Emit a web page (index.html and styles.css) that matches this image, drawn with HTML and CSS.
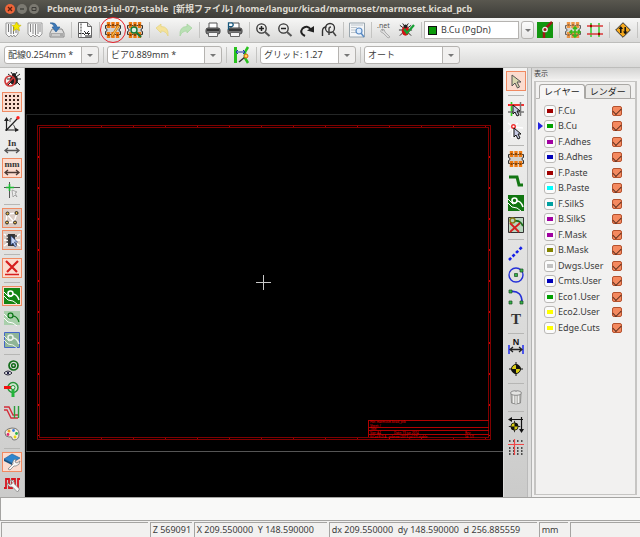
FILE: index.html
```html
<!DOCTYPE html>
<html lang="ja">
<head>
<meta charset="utf-8">
<title>Pcbnew</title>
<link rel="stylesheet" href="styles.css">
</head>
<body>
<svg class="defs" aria-hidden="true">
  <symbol id="chip" viewBox="0 0 16 16">
    <path d="M.5 3.500h15v3a1.500 1.500 0 0 0 0 3v3H.5v-3a1.500 1.500 0 0 0 0-3z" fill="#d2d0cc" stroke="#333"/>
    <path d="M3.500 0v6M8 0v6M12.500 0v6M3.500 10v6M8 10v6M12.500 10v6" stroke="#ee7a10" stroke-width="3.400"/>
    <path d="M2.500 3h2M7 3h2M11.500 3h2M2.500 13h2M7 13h2M11.500 13h2" stroke="#6a3400" stroke-width="1.600"/>
  </symbol>
  <symbol id="zone" viewBox="0 0 16 16">
    <path d="M0 4l5 5 3-1M0 8l4 4 5 1 4 3" fill="none" stroke="#fff" stroke-width="1"/>
    <circle cx="6.500" cy="5.500" r="2.500" fill="none" stroke="#fff" stroke-width="1.600"/>
    <path d="M9 6q4 0 6 6" fill="none" stroke="#fff" stroke-width="1.600"/>
  </symbol>
  <symbol id="printer" viewBox="0 0 16 16">
    <path d="M4 6V1h8v5" fill="#fff" stroke="#555"/>
    <rect x="1" y="6" width="14" height="6" rx="2" fill="#777" stroke="#444"/>
    <path d="M2 8h12" stroke="#222" stroke-width="1.500"/>
    <path d="M3.500 10.500h9v4h-9z" fill="#f4f4f4" stroke="#666"/>
  </symbol>
  <symbol id="target" viewBox="0 0 16 16">
    <path d="M8 1v14M1 8h14" stroke="#111"/>
    <circle cx="8" cy="8" r="4.500" fill="#d8cc10" stroke="#111"/>
    <path d="M8 8V3.500A4.500 4.500 0 0 1 12.500 8zM8 8v4.500A4.500 4.500 0 0 1 3.500 8z" fill="#111"/>
  </symbol>
  <symbol id="pointer" viewBox="0 0 16 16">
    <path d="M4 2v11l3-3 2.500 5 2-1-2.500-5h4z" fill="#d9d9b0" stroke="#555"/>
  </symbol>
  <symbol id="bug" viewBox="0 0 16 16">
    <path d="M2 3l4 3M1 8h4M2 14l4-4M14 3l-4 3M15 8h-4M14 14l-4-4M5 1l2 3M11 1L9 4" stroke="#222"/>
    <ellipse cx="8" cy="9" rx="4" ry="5"/>
    <circle cx="8" cy="4" r="2" fill="#222"/>
  </symbol>
</svg>

<div class="window">
  <header class="titlebar">
    <div class="winbuttons">
      <button class="winbtn close" aria-label="閉じる"><svg viewBox="0 0 10 10"><path d="M3 3l4 4M7 3L3 7" stroke="#5a2010" stroke-width="1.300"/></svg></button>
      <button class="winbtn" aria-label="最小化"><svg viewBox="0 0 10 10"><path d="M3 5h4" stroke="#3c3b37" stroke-width="1.300"/></svg></button>
      <button class="winbtn" aria-label="最大化"><svg viewBox="0 0 10 10"><path d="M3 3.500h4v3H3z" fill="none" stroke="#3c3b37"/></svg></button>
    </div>
    <h1>Pcbnew (2013-jul-07)-stable &nbsp;[新規ファイル] /home/langur/kicad/marmoset/marmoset.kicad_pcb</h1>
  </header>

  <div class="toolbar main-tools">
    <button class="tool" aria-label="新規"><svg viewBox="0 0 16 16"><path d="M1 1h12v11l-3 3-1-2-2 2-1-2-2 2-3-3z" fill="#f7f7f7" stroke="#999"/><path d="M3.500 2v8M6 2v10M8.500 4v8M11 5v6" stroke="#777"/><path d="M11.500 0l1.500 3 3 .3-2.200 2.200.7 3.200-3-1.700-3 1.700.7-3.200L7 3.300 10 3z" fill="#f5e700" stroke="#c4b400" stroke-width=".6"/></svg></button>
    <button class="tool" aria-label="開く"><svg viewBox="0 0 16 16"><path d="M1 1h14v11l-3 3-2-2-2 2-2-2-2 2-3-3z" fill="#f7f7f7" stroke="#999"/><path d="M3.500 2v8M6 2v10M8.500 2v11M11 2v10M13 2v8" stroke="#888"/></svg></button>
    <button class="tool" aria-label="保存"><svg viewBox="0 0 16 16"><path d="M3 7h10l2 4v4H1v-4z" fill="#ddd" stroke="#888"/><path d="M2 11h12v3.500H2z" fill="#aaa"/><path d="M3 13h8" stroke="#eee"/><path d="M1 1q6-1 7 4h3L7 10 3 5h2Q5 2 1 1z" fill="#3c78b8" stroke="#245a94" stroke-width=".6"/></svg></button>
    <span class="sep"></span>
    <button class="tool" aria-label="ページ設定"><svg viewBox="0 0 16 16"><path d="M1.500.5h9l4 4v11h-13z" fill="#fff" stroke="#666"/><path d="M10.500.5v4h4" fill="#ddd" stroke="#666"/><path d="M4 1.500v13M2 11.500h12" stroke="#333" stroke-dasharray="2 1"/><path d="M7 9l2 2-2 2M12 9l-2 2 2 2" fill="none" stroke="#333"/><path d="M8 13h6v2H8z" fill="#888"/></svg></button>
    <span class="sep"></span>
    <button class="tool marked" aria-label="モジュールエディタ"><svg viewBox="0 0 16 16"><use href="#chip"/><path d="M14.500 4L8 14l-1.500 1 .2-2.200L13 3z" fill="#ffc35a" stroke="#c06a00" stroke-width=".7"/></svg></button>
    <button class="tool" aria-label="モジュールビューア"><svg viewBox="0 0 16 16"><use href="#chip"/><circle cx="7" cy="8" r="3" fill="#dcefe0" stroke="#157a38" stroke-width="1.400"/><path d="M9.500 10.500L14 15" stroke="#157a38" stroke-width="2.200"/></svg></button>
    <span class="sep"></span>
    <button class="tool" aria-label="元に戻す"><svg viewBox="0 0 16 16"><path d="M1 6l5-4v2.500q8 0 7 9.500-2-5-7-5V11z" fill="#f5e29a" stroke="#e2d27c" stroke-width=".7"/></svg></button>
    <button class="tool" aria-label="やり直す"><svg viewBox="0 0 16 16"><path d="M15 6l-5-4v2.500q-8 0-7 9.500 2-5 7-5V11z" fill="#b9e0b4" stroke="#a3d39c" stroke-width=".7"/></svg></button>
    <span class="sep"></span>
    <button class="tool" aria-label="印刷"><svg><use href="#printer"/></svg></button>
    <button class="tool" aria-label="プロット"><svg viewBox="0 0 16 16"><use href="#printer"/><path d="M1.500 8V.8h2.700q2 0 2 1.900t-2 1.900H1.500" fill="#fff" stroke="#17567a" stroke-width="1.300"/></svg></button>
    <span class="sep"></span>
    <button class="tool" aria-label="ズームイン"><svg viewBox="0 0 16 16"><circle cx="6.500" cy="6.500" r="4.700" fill="none" stroke="#333" stroke-width="1.300"/><path d="M4 6.500h5M6.500 4v5" stroke="#222" stroke-width="1.500"/><path d="M10 10l4.500 4" stroke="#555" stroke-width="2"/></svg></button>
    <button class="tool" aria-label="ズームアウト"><svg viewBox="0 0 16 16"><circle cx="6.500" cy="6.500" r="4.700" fill="none" stroke="#333" stroke-width="1.300"/><path d="M4 6.500h5" stroke="#222" stroke-width="1.500"/><path d="M10 10l4.500 4" stroke="#555" stroke-width="2"/></svg></button>
    <button class="tool" aria-label="再描画"><svg viewBox="0 0 16 16"><path d="M6 14Q0 11 3.500 6.500q4.500-4 8.500 1" fill="none" stroke="#222" stroke-width="2"/><path d="M8 8.500l7 2V4z" fill="#222"/></svg></button>
    <button class="tool" aria-label="全体表示"><svg viewBox="0 0 16 16"><path d="M1.500 14V9q0-4 4-4" fill="none" stroke="#333" stroke-width="1.400"/><circle cx="9" cy="6" r="4.500" fill="none" stroke="#333" stroke-width="1.300"/><path d="M8 13V7q0-2 2-2M12 10l3 4" fill="none" stroke="#444" stroke-width="1.500"/></svg></button>
    <span class="sep"></span>
    <button class="tool" aria-label="検索"><svg viewBox="0 0 16 16"><path d="M.5 1h15v14H.5z" fill="#f3f5f7" stroke="#9aa6ae"/><path d="M2 3h12M2 5.500h6M2 8h5M2 10.500h5" stroke="#bcc5cc"/><circle cx="10" cy="9" r="3" fill="#dfeeff" stroke="#5c8cc4" stroke-width="1.200"/><path d="M12 11l3 4" stroke="#5c8cc4" stroke-width="1.500"/></svg></button>
    <span class="sep"></span>
    <button class="tool" aria-label="ネットリスト"><svg viewBox="0 0 16 16"><path d="M5 7q-3 3 1 4l5 5 2-1-5-5q0-3-3-3l1 2z" fill="#ddd" stroke="#999" stroke-width=".7"/><text class="nettext" x="0" y="6">.net</text></svg></button>
    <button class="tool" aria-label="DRC"><svg viewBox="0 0 16 16"><use href="#bug" fill="#d01414" x="-1" width="15"/><path d="M5 7l3 4 7-8" fill="none" stroke="#16a034" stroke-width="2.200"/></svg></button>
    <span class="sep"></span>
    <label class="layer-combo"><span class="layer-chip"></span><select aria-label="レイヤー選択"><option>B.Cu (PgDn)</option></select><span class="drop"></span></label>
    <button class="tool wide" aria-label="レイヤーペア"><svg viewBox="0 0 16 16"><path d="M0 0h16v16H0z" fill="#12960f"/><path d="M7 16v-6M9 6l6-6" stroke="#a01818" stroke-width="2.500"/><circle cx="8" cy="7.500" r="2.200" fill="#a01818" stroke="#eee" stroke-width="1.300"/></svg></button>
    <span class="sep"></span>
    <button class="tool" aria-label="モジュールモード"><svg viewBox="0 0 16 16"><use href="#chip" opacity=".75"/><path d="M10 5v10M5 10h10M8 7l2-2 2 2M8 13l2 2 2-2M7 8l-2 2 2 2M13 8l2 2-2 2" fill="none" stroke="#38b818" stroke-width="1.600"/></svg></button>
    <button class="tool" aria-label="配線モード"><svg viewBox="0 0 16 16"><path d="M4 1v14M12 1v14" stroke="#5fd35b" stroke-width="2"/><path d="M0 4h16M0 12h16" stroke="#d93a3a" stroke-width="1.400"/><path d="M3 4h2M11 12h2" stroke="#a00" stroke-width="2.400"/></svg></button>
    <span class="sep"></span>
    <button class="tool" aria-label="FreeRoute"><svg viewBox="0 0 16 16"><path d="M8 .7L15.300 8 8 15.300.7 8z" fill="#f5a81c" stroke="#333"/><path d="M5.800 11V5.500M10.200 5v5.500" stroke="#111" stroke-width="1.500"/><path d="M3.500 7l2.300-3 2.300 3zM8 9.500h4.500L10.200 12.500z" fill="#111"/></svg></button>
    <span class="sep"></span>
  </div>

  <div class="toolbar options">
    <span class="combo track"><select aria-label="配線幅"><option>配線0.254mm *</option></select></span>
    <span class="sep"></span>
    <span class="combo via"><select aria-label="ビアサイズ"><option>ビア0.889mm *</option></select></span>
    <span class="sep"></span>
    <button class="tool" aria-label="自動配線幅"><svg viewBox="0 0 16 16"><path d="M2.500 0v16" stroke="#29c21f" stroke-width="3"/><path d="M15 0l-3 5v6l3 5" fill="none" stroke="#29c21f" stroke-width="2.500"/><path d="M3 5h9M3 5l2-2M3 5l2 2M12 5l-2-2M12 5l-2 2" stroke="#1733a8"/><path d="M6 15l6-5" stroke="#333" stroke-width="1.500"/><circle cx="13" cy="9" r="2" fill="#ffd84a" stroke="#d95c10"/></svg></button>
    <span class="sep"></span>
    <span class="combo"><select aria-label="グリッド"><option>グリッド: 1.27</option></select></span>
    <span class="sep"></span>
    <span class="combo"><select aria-label="ズーム"><option>オート</option></select></span>
  </div>

  <main class="workspace">
    <div class="sidebar">
      <button class="tool" aria-label="DRCオフ"><svg viewBox="0 0 16 16"><use href="#bug" x="2" y="-1" width="16" height="16" fill="#222"/><circle cx="6" cy="9" r="5" fill="none" stroke="#d03a3a" stroke-width="1.700"/><path d="M2.500 12.500l7-7" stroke="#d03a3a" stroke-width="1.700"/></svg></button>
      <button class="tool on" aria-label="グリッド表示"><svg viewBox="0 0 16 16"><path d="M1 2h15M1 6h15M1 10h15M1 14h15" stroke="#3a2018" stroke-width="2" stroke-dasharray="2 2"/></svg></button>
      <button class="tool" aria-label="極座標"><svg viewBox="0 0 16 16"><path d="M2.500 15V3M1 14h13M2.500 14L14 2" fill="none" stroke="#222" stroke-width="1.200"/><path d="M0 5l2.500-4L5 5zM11 11.500l4 2.500-4 2z" fill="#222"/><path d="M6 6V3q1-1 2 0M8 8q3 1 3 5" fill="none" stroke="#555"/><circle cx="14" cy="1.800" r="1.700" fill="#f22"/></svg></button>
      <button class="tool" aria-label="インチ"><svg viewBox="0 0 16 16"><text class="unit" x="8" y="8">In</text><path d="M1 12.500h14M4 10l-3 2.500L4 15M12 10l3 2.500-3 2.500" fill="none" stroke="#555" stroke-width="1.300"/></svg></button>
      <button class="tool on" aria-label="ミリメートル"><svg viewBox="0 0 16 16"><text class="unit" x="8" y="7">mm</text><path d="M1 12.500h14M4 10l-3 2.500L4 15M12 10l3 2.500-3 2.500" fill="none" stroke="#4b3934" stroke-width="1.300"/></svg></button>
      <button class="tool" aria-label="カーソル形状"><svg viewBox="0 0 16 16"><path d="M5.500 0v16M0 5.500h16" stroke="#555"/><path d="M5.500 2v7M2 5.500h8" stroke="#20b835" stroke-width="1.600"/><path d="M8 8l5 2-2 1 2 4-2-2-2 2z" fill="#eee" stroke="#999" stroke-width=".8"/></svg></button>
      <span class="sep"></span>
      <button class="tool on grey" aria-label="ラッツネスト"><svg viewBox="0 0 16 16"><path d="M3 4l10-1-3 9-8 1zM3 4l7 8" fill="none" stroke="#fff" stroke-width="1.300"/><g fill="#e8b84a" stroke="#222"><circle cx="3.500" cy="3.500" r="1.500"/><circle cx="12.500" cy="3" r="1.500"/><circle cx="3" cy="12.500" r="1.500"/><circle cx="11" cy="12.500" r="1.500"/></g></svg></button>
      <button class="tool on grey" aria-label="モジュールラッツ"><svg viewBox="0 0 16 16"><path d="M0 2l4 3M0 8h4M0 14l4-3M16 2l-4 3M16 8h-4M16 14l-4-3" stroke="#fff" stroke-width="1.500"/><path d="M4 2h7v12H4z" fill="#333"/><path d="M2.500 4h2M2.500 7h2M2.500 10h2M10 4h3M10 12h3" stroke="#444" stroke-width="1.300"/><path d="M7 4v9l2-2 2 4 1.500-1-2-4h3z" fill="#c9d6f2" stroke="#26488b" stroke-width=".7"/></svg></button>
      <span class="sep"></span>
      <button class="tool on" aria-label="自動削除"><svg viewBox="0 0 16 16"><path d="M2 1l11 11M14 1L3 12" stroke="#d61e1e" stroke-width="2.200"/><path d="M1 14.500h14" stroke="#d61e1e" stroke-width="1.500"/></svg></button>
      <span class="sep"></span>
      <button class="tool on" aria-label="ゾーン表示"><svg viewBox="0 0 16 16"><path d="M0 0h16v16H0z" fill="#138413"/><use href="#zone"/></svg></button>
      <button class="tool" aria-label="ゾーン非表示"><svg viewBox="0 0 16 16"><path d="M0 1h16v14H0z" fill="#a9cfab"/><use href="#zone"/><circle cx="6.500" cy="5.500" r="2.500" fill="none" stroke="#157c20" stroke-width="1.500"/><path d="M9 6q4 0 6 6" fill="none" stroke="#157c20" stroke-width="1.500"/></svg></button>
      <button class="tool" aria-label="ゾーン輪郭"><svg viewBox="0 0 16 16"><path d="M.5.5h15v15H.5z" fill="#8fb596" stroke="#4468c8"/><use href="#zone" opacity=".8"/></svg></button>
      <span class="sep"></span>
      <button class="tool" aria-label="パッド表示"><svg viewBox="0 0 16 16"><circle cx="9.500" cy="5.500" r="4.500" fill="none" stroke="#116b19" stroke-width="1.700"/><circle cx="9.500" cy="5.500" r="1.800" fill="none" stroke="#116b19" stroke-width="1.500"/><path d="M0 13q4-4 8 0-4 4-8 0z" fill="#fff" stroke="#223"/><circle cx="4" cy="13" r="1.300" fill="#224"/></svg></button>
      <button class="tool" aria-label="ビア表示"><svg viewBox="0 0 16 16"><circle cx="9" cy="5.500" r="5" fill="#cfe6cf" stroke="#28923a" stroke-width="1.500"/><path d="M0 5.500h7" stroke="#f01010" stroke-width="3"/><path d="M9 6v9" stroke="#22b43a" stroke-width="3"/><circle cx="9" cy="5.500" r="2" fill="#e8f4e8" stroke="#28923a"/></svg></button>
      <button class="tool" aria-label="配線表示"><svg viewBox="0 0 16 16"><path d="M0 3h5l4 8h5M0 6h3l4 8h7" fill="none" stroke="#d22e3a" stroke-width="1.400"/><path d="M10.500 2v12M14.500 2v12" stroke="#2b9c3b" stroke-width="1.400"/></svg></button>
      <button class="tool" aria-label="コントラスト"><svg viewBox="0 0 16 16"><path d="M8 2q7 0 7 6t-5 6q-2 0-2-2t-3-1Q1 11 1 7t7-5z" fill="#f4eedb" stroke="#777"/><circle cx="5" cy="5" r="1.500" fill="#f0a020"/><circle cx="9.500" cy="4.500" r="1.400" fill="#3b7be0"/><circle cx="12.500" cy="7.500" r="1.400" fill="#28b04a"/><circle cx="4" cy="8.500" r="1.400" fill="#e02a70"/><circle cx="11" cy="11" r="1.400" fill="#e8d510"/></svg></button>
      <span class="sep"></span>
      <button class="tool on" aria-label="レイヤーマネージャ"><svg viewBox="0 0 16 16"><path d="M0 5l8-5 8 4-8 5z" fill="#2e86cf" stroke="#1b5a94" stroke-width=".6"/><path d="M0 5v2l8 4V9z" fill="#16507f"/><path d="M4 15l5-5q-1-4 3-5l-1 3 2 1 3-2q0 4-4 5l-2 0-4 4z" fill="#f8f8f8" stroke="#777" stroke-width=".7"/></svg></button>
      <button class="tool" aria-label="マイクロ波"><svg viewBox="0 0 16 16"><path d="M0 12h2V3h3v9h3V3h3v9h3V3h2" fill="none" stroke="#d8161f" stroke-width="1.800"/><path d="M15.500 13l-5-5q0-4-4-4l2 3-2 2-3-2q0 4 5 4l5 5z" fill="#f8f8f8" stroke="#777" stroke-width=".7"/></svg></button>
    </div>

    <div class="canvas">
      <svg viewBox="0 0 478 429" role="img" aria-label="基板">
        <g fill="none" shape-rendering="crispEdges">
          <path d="M1.500 383V46.500H478" stroke="#242626"/>
          <path d="M1 383.500h477" stroke="#555"/>
          <path d="M12.500 57.500h453v314h-453zM14.500 59.500h449v310h-449z" stroke="#800000"/>
          <path d="M44 58.500h420M44 370.500h420" stroke="#a00000" stroke-dasharray="1 31"/>
          <path d="M13.500 88v280M464.500 88v280" stroke="#d00000" stroke-dasharray="2 29"/>
          <path d="M343.500 369v-16.500H464M343 359.500h121M343 362.500h121M343 366.500h121" stroke="#b00000"/>
          <path d="M231 214.500h15M238.500 207v15" stroke="#c8c8c8"/>
        </g>
        <g class="sheet-text">
          <text x="345" y="355">File: marmoset.kicad_pcb</text>
          <text x="345" y="359">Sheet: /</text>
          <text x="345" y="362">Title:</text>
          <text x="345" y="366">Size: A4</text>
          <text x="369" y="366">Date: 19 jun 2014</text>
          <text x="440" y="366">Rev:</text>
          <text x="345" y="370">KiCad E.D.A. &#160;pcbnew (2013-jul-07)-stable</text>
          <text x="440" y="370">Id: 1/1</text>
        </g>
      </svg>
    </div>

    <div class="sidebar right">
      <button class="tool on" aria-label="選択"><svg><use href="#pointer"/></svg></button>
      <span class="sep"></span>
      <button class="tool" aria-label="ネットハイライト"><svg viewBox="0 0 16 16"><path d="M3.500 1v14" stroke="#2fd41c" stroke-width="1.600"/><path d="M0 4h16" stroke="#f02020" stroke-width="1.800"/><path d="M12.500 1v14M0 11h16" stroke="#777" stroke-width="1.500"/><path d="M5 4v9l2-2 2 4 2-1-2-4h3z" fill="#c7cbe4" stroke="#111"/></svg></button>
      <button class="tool" aria-label="ローカルラッツネスト"><svg viewBox="0 0 16 16"><path d="M5 4L0 0M5 4L10 0M5 4L0 9M5 4l10 1M5 4l-1 11" stroke="#fff" stroke-width="1.300"/><circle cx="5.500" cy="3.500" r="1.800" fill="#fff" stroke="#f03030" stroke-width="1.400"/><path d="M6 5v9l2-2 2 4 2-1-2-4h3z" fill="#c7cbe4" stroke="#111"/></svg></button>
      <span class="sep"></span>
      <button class="tool" aria-label="モジュール追加"><svg><use href="#chip"/></svg></button>
      <button class="tool" aria-label="配線追加"><svg viewBox="0 0 16 16"><path d="M1 4h8l2 8h4" fill="none" stroke="#137613" stroke-width="3"/></svg></button>
      <button class="tool" aria-label="ゾーン追加"><svg viewBox="0 0 16 16"><path d="M0 0h16v16H0z" fill="#117611"/><use href="#zone"/></svg></button>
      <button class="tool" aria-label="キープアウト"><svg viewBox="0 0 16 16"><path d="M.5.5h15v15H.5z" fill="#b8d5bd" stroke="#333"/><path d="M7 4q5-1 8 5" fill="none" stroke="#176c1a" stroke-width="1.800"/><circle cx="4.500" cy="3.500" r="2.500" fill="none" stroke="#87801b" stroke-width="1.500"/><path d="M2 6l9 9M12 6l-10 9" stroke="#d52020" stroke-width="1.800"/></svg></button>
      <span class="sep"></span>
      <button class="tool" aria-label="線"><svg viewBox="0 0 16 16"><path d="M1 15L15 1" stroke="#1520e8" stroke-width="2.600" stroke-dasharray="3 2"/></svg></button>
      <button class="tool" aria-label="円"><svg viewBox="0 0 16 16"><circle cx="8" cy="8" r="7" fill="none" stroke="#2430d8" stroke-width="1.400"/><path d="M6.500 6.500h3v3h-3zM12 2h3v3h-3z" fill="#36b34a" stroke="#174c20" stroke-width=".7"/></svg></button>
      <button class="tool" aria-label="円弧"><svg viewBox="0 0 16 16"><path d="M3 2.500q11-1 11 11" fill="none" stroke="#2430d8" stroke-width="1.700"/><path d="M1 1h3v3H1zM1 12h3v3H1zM12 12h3v3h-3z" fill="#36b34a" stroke="#174c20" stroke-width=".7"/></svg></button>
      <button class="tool" aria-label="テキスト"><svg viewBox="0 0 16 16"><text class="tee" x="8" y="13">T</text></svg></button>
      <span class="sep"></span>
      <button class="tool" aria-label="寸法"><svg viewBox="0 0 16 16"><path d="M1 6v9M15 6v9" stroke="#3541ee" stroke-width="1.700"/><path d="M2 10.500h12M5 8l-3 2.500L5 13M11 8l3 2.500-3 2.500" fill="none" stroke="#222" stroke-width="1.300"/><text class="dim" x="8" y="6">N</text></svg></button>
      <button class="tool" aria-label="ターゲット"><svg><use href="#target"/></svg></button>
      <span class="sep"></span>
      <button class="tool" aria-label="削除"><svg viewBox="0 0 16 16"><path d="M3 5h10l-.5 9q-4.500 2-9 0z" fill="#bcbcb8" stroke="#777" stroke-width=".7"/><path d="M5.500 6v8M8 6v9M10.500 6v8" stroke="#eee"/><ellipse cx="8" cy="4" rx="5.500" ry="2.300" fill="#e4e4e2" stroke="#777" stroke-width=".8"/><path d="M7 1h2v2H7z" fill="#aaa"/></svg></button>
      <span class="sep"></span>
      <button class="tool" aria-label="オフセット"><svg viewBox="0 0 16 16"><use href="#target" x="0" y="3" width="13" height="13"/><path d="M1 2.500h14M13.500 0v14" stroke="#111" stroke-width="1.200"/><path d="M4 0L0 2.500 4 5zM11 12h5l-2.500 4z" fill="#111"/></svg></button>
      <button class="tool" aria-label="グリッド原点"><svg viewBox="0 0 16 16"><path d="M1 2h15M1 9h15M1 12h15M1 15h15" stroke="#222" stroke-width="1.500" stroke-dasharray="1.500 2.500"/><path d="M0 5.500h16M6.500 0v16" stroke="#ef4747" stroke-width="1.200"/></svg></button>
    </div>

    <div class="sash"></div>

    <aside class="layers">
      <h2>表示</h2>
      <div class="notebook">
        <div class="tabs" role="tablist">
          <button class="tab active" role="tab" aria-selected="true">レイヤー</button>
          <button class="tab" role="tab" aria-selected="false">レンダー</button>
        </div>
        <ul class="layer-list">
          <li><button class="swatch red" aria-label="色"></button><label for="l1">F.Cu</label><input type="checkbox" id="l1" checked></li>
          <li class="current"><button class="swatch green" aria-label="色"></button><label for="l2">B.Cu</label><input type="checkbox" id="l2" checked></li>
          <li><button class="swatch purple" aria-label="色"></button><label for="l3">F.Adhes</label><input type="checkbox" id="l3" checked></li>
          <li><button class="swatch blue" aria-label="色"></button><label for="l4">B.Adhes</label><input type="checkbox" id="l4" checked></li>
          <li><button class="swatch red" aria-label="色"></button><label for="l5">F.Paste</label><input type="checkbox" id="l5" checked></li>
          <li><button class="swatch cyan" aria-label="色"></button><label for="l6">B.Paste</label><input type="checkbox" id="l6" checked></li>
          <li><button class="swatch teal" aria-label="色"></button><label for="l7">F.SilkS</label><input type="checkbox" id="l7" checked></li>
          <li><button class="swatch purple" aria-label="色"></button><label for="l8">B.SilkS</label><input type="checkbox" id="l8" checked></li>
          <li><button class="swatch purple" aria-label="色"></button><label for="l9">F.Mask</label><input type="checkbox" id="l9" checked></li>
          <li><button class="swatch olive" aria-label="色"></button><label for="l10">B.Mask</label><input type="checkbox" id="l10" checked></li>
          <li><button class="swatch silver" aria-label="色"></button><label for="l11">Dwgs.User</label><input type="checkbox" id="l11" checked></li>
          <li><button class="swatch blue" aria-label="色"></button><label for="l12">Cmts.User</label><input type="checkbox" id="l12" checked></li>
          <li><button class="swatch green" aria-label="色"></button><label for="l13">Eco1.User</label><input type="checkbox" id="l13" checked></li>
          <li><button class="swatch yellow" aria-label="色"></button><label for="l14">Eco2.User</label><input type="checkbox" id="l14" checked></li>
          <li><button class="swatch yellow" aria-label="色"></button><label for="l15">Edge.Cuts</label><input type="checkbox" id="l15" checked></li>
        </ul>
      </div>
    </aside>
  </main>

  <div class="messages"></div>

  <footer class="status">
    <span class="cell"></span>
    <span class="cell">Z 569091</span>
    <span class="cell">X 209.550000 &nbsp;Y 148.590000</span>
    <span class="cell">dx 209.550000 &nbsp;dy 148.590000 &nbsp;d 256.885559</span>
    <span class="cell">mm</span>
    <span class="cell"></span>
  </footer>
</div>
</body>
</html>
```
FILE: styles.css
```css
* { box-sizing: border-box; }

body {
  margin: 0;
  font: 9px/12px "Noto Sans", "Noto Sans CJK JP", sans-serif;
  color: #3c3c3c;
  background: #f2f1f0;
}

button, select, input {
  font: inherit;
  color: inherit;
  margin: 0;
  padding: 0;
}

.defs { position: absolute; width: 0; height: 0; }

.window {
  display: flex;
  flex-direction: column;
  min-height: 100vh;
}

/* Title bar */
.titlebar {
  display: flex;
  align-items: center;
  gap: 8px;
  height: 18px;
  padding-left: 5px;
  background: linear-gradient(#59574f, #3d3c38);
  color: #dfdbd2;
}
.titlebar h1 {
  margin: 0;
  font-size: 9px;
  font-weight: bold;
  white-space: nowrap;
}
.winbuttons { display: flex; gap: 2px; }
.winbtn {
  width: 10px;
  height: 10px;
  border: 0;
  border-radius: 50%;
  background: #7b7971;
}
.winbtn.close { background: #ee6539; }
.winbtn svg { display: block; }

/* Toolbars */
.toolbar {
  display: flex;
  align-items: center;
  height: 25px;
  background: linear-gradient(#f6f6f5, #d9d9d8);
  border-bottom: 1px solid #bdbdbb;
}
.main-tools { padding-left: 2px; }
.tool {
  position: relative;
  flex: none;
  display: flex;
  align-items: center;
  justify-content: center;
  width: 20px;
  height: 20px;
  margin: 1px;
  border: 1px solid transparent;
  background: none;
}
.tool svg { flex: none; width: 16px; height: 16px; overflow: visible; }
.tool.on { background: #fbdccf; border-color: #f08a62; }
.tool.on.grey { background: #dccdc5; }
.marked::after {
  content: "";
  position: absolute;
  inset: -4px;
  border: 1px solid #e8202a;
  border-radius: 50%;
}
.toolbar .sep {
  flex: none;
  width: 6px;
  height: 16px;
  background: linear-gradient(#c4c4c2, #c4c4c2) center / 1px 100% no-repeat;
}

select {
  appearance: none;
  border: 0;
  background: none;
  outline: 0;
}
.combo {
  position: relative;
  width: 96px;
  height: 18px;
  border: 1px solid #b5b3b0;
  border-radius: 3px;
  background: linear-gradient(to right, #fff calc(100% - 17px), #b5b3b0 calc(100% - 17px), #b5b3b0 calc(100% - 16px), #f1f0ef calc(100% - 16px));
}
.combo.track { width: 95px; }
.combo.via { width: 115px; }
.combo select { display: block; width: 100%; height: 100%; padding: 0 18px 0 3px; }
.combo::after {
  content: "";
  position: absolute;
  right: 5px;
  top: 7px;
  border: 3px solid transparent;
  border-top-color: #777;
  border-bottom: 0;
  pointer-events: none;
}
.options { padding-left: 4px; }
.options .sep { margin: 0 1px; }

.layer-combo {
  display: flex;
  align-items: center;
  width: 110px;
  height: 18px;
}
.layer-chip {
  width: 15px;
  height: 100%;
  border: 1px solid #b5b3b0;
  border-right: 0;
  background: linear-gradient(#0a9a0a, #0a9a0a) center / 7px 7px no-repeat, linear-gradient(#111, #111) center / 9px 9px no-repeat, #fff;
}
.layer-combo select {
  flex: 1;
  min-width: 0;
  height: 100%;
  padding-left: 2px;
  border: 1px solid #b5b3b0;
  border-left: 0;
  background: #fff;
}
.drop {
  display: flex;
  align-items: center;
  justify-content: center;
  width: 13px;
  height: 100%;
  margin-left: 2px;
  border: 1px solid #b5b3b0;
  border-radius: 3px;
  background: linear-gradient(#fbfbfb, #e8e7e6);
}
.drop::before {
  content: "";
  border: 3px solid transparent;
  border-top-color: #777;
  border-bottom: 0;
}

.nettext { font-size: 7px; fill: #555; }
.unit { font: bold 9px "Liberation Serif", serif; text-anchor: middle; fill: #333; }
.tee { font: bold 15px "Liberation Serif", serif; text-anchor: middle; fill: #333; }
.dim { font: bold 9px "Liberation Sans", sans-serif; text-anchor: middle; fill: #111; }

/* Workspace */
.workspace { flex: 1; display: flex; }
.sidebar {
  flex: none;
  display: flex;
  flex-direction: column;
  align-items: center;
  width: 25px;
  padding-top: 1px;
  background: linear-gradient(#f3f3f2, #cbcbca);
  border-right: 1px solid #bababa;
}
.sidebar.right { padding-top: 2px; border-left: 1px solid #ddd; }
.sidebar .sep {
  width: 16px;
  height: 6px;
  background: linear-gradient(#b6b6b4, #b6b6b4) center / 100% 1px no-repeat;
}
.canvas { flex: 1; display: flex; min-width: 0; background: #000; }
.canvas svg { display: block; width: 100%; }
.sheet-text { font-size: 3px; fill: #ff0000; }
.sash { flex: none; width: 4px; background: #dededd; border-right: 1px solid #b4b4b3; }

/* Layer manager */
.layers {
  flex: none;
  display: flex;
  flex-direction: column;
  width: 108px;
  padding: 0 3px 2px 2px;
}
.layers h2 {
  margin: 0 -3px 2px -2px;
  padding-left: 2px;
  font-size: 7px;
  line-height: 11px;
  font-weight: normal;
  background: linear-gradient(#d4d4d3, #efeeed);
}
.notebook { flex: 1; border: 2px solid #c6c5c3; border-width: 1px 2px; }
.tabs {
  display: flex;
  padding: 2px 0 0 3px;
  border-bottom: 1px solid #b8b6b3;
}
.tab {
  height: 15px;
  padding: 0 4px;
  margin-bottom: -1px;
  border: 1px solid #a9a7a4;
  border-radius: 3px 3px 0 0;
  background: #e9e8e6;
  color: #222;
  white-space: nowrap;
}
.tab.active { background: #f7f6f6; border-bottom-color: #f7f6f6; }
.layer-list {
  display: flex;
  flex-direction: column;
  justify-content: space-between;
  height: 232px;
  margin: 4px 0 0;
  padding: 0 13px 0 8px;
  list-style: none;
}
.layer-list li {
  position: relative;
  display: flex;
  align-items: center;
  gap: 2px;
  height: 15px;
}
.layer-list label { flex: 1; white-space: nowrap; }
.current::before {
  content: "";
  position: absolute;
  left: -6px;
  border: 4px solid transparent;
  border-left: 5px solid #2222e0;
  border-right: 0;
}
.swatch {
  display: flex;
  align-items: center;
  justify-content: center;
  width: 12px;
  height: 12px;
  border: 1px solid #bbb9b6;
  border-radius: 3px;
  background: #fbfbfb;
}
.swatch::before { content: ""; width: 6px; height: 4px; background: currentColor; }
.red { color: #a00000; }
.green { color: #00a000; }
.purple { color: #a000a0; }
.blue { color: #0000b8; }
.cyan { color: #00ffff; }
.teal { color: #00a0a0; }
.olive { color: #848400; }
.silver { color: #c2c2c2; }
.yellow { color: #ffff00; }
.layer-list input {
  appearance: none;
  display: flex;
  align-items: center;
  justify-content: center;
  width: 10px;
  height: 10px;
  border: 1px solid #b5522e;
  border-radius: 2px;
  background: #f4895f;
}
.layer-list input:checked::before {
  content: "";
  width: 7px;
  height: 4px;
  border: solid #5a3020;
  border-width: 0 0 1px 1px;
  transform: rotate(-45deg);
}

/* Message panel and status bar */
.messages {
  height: 24px;
  background: #f9f9f8;
  border: 1px solid #a5a4a2;
  border-right: 0;
}
.status {
  display: grid;
  grid-template-columns: 146fr 42px 133px 208px 29px 70fr;
  gap: 2px;
  height: 16px;
  padding: 1px 0 0 1px;
}
.cell {
  padding: 1px 2px;
  border-left: 1px solid #a5a4a2;
  border-top: 1px solid #a5a4a2;
  white-space: nowrap;
}
```
